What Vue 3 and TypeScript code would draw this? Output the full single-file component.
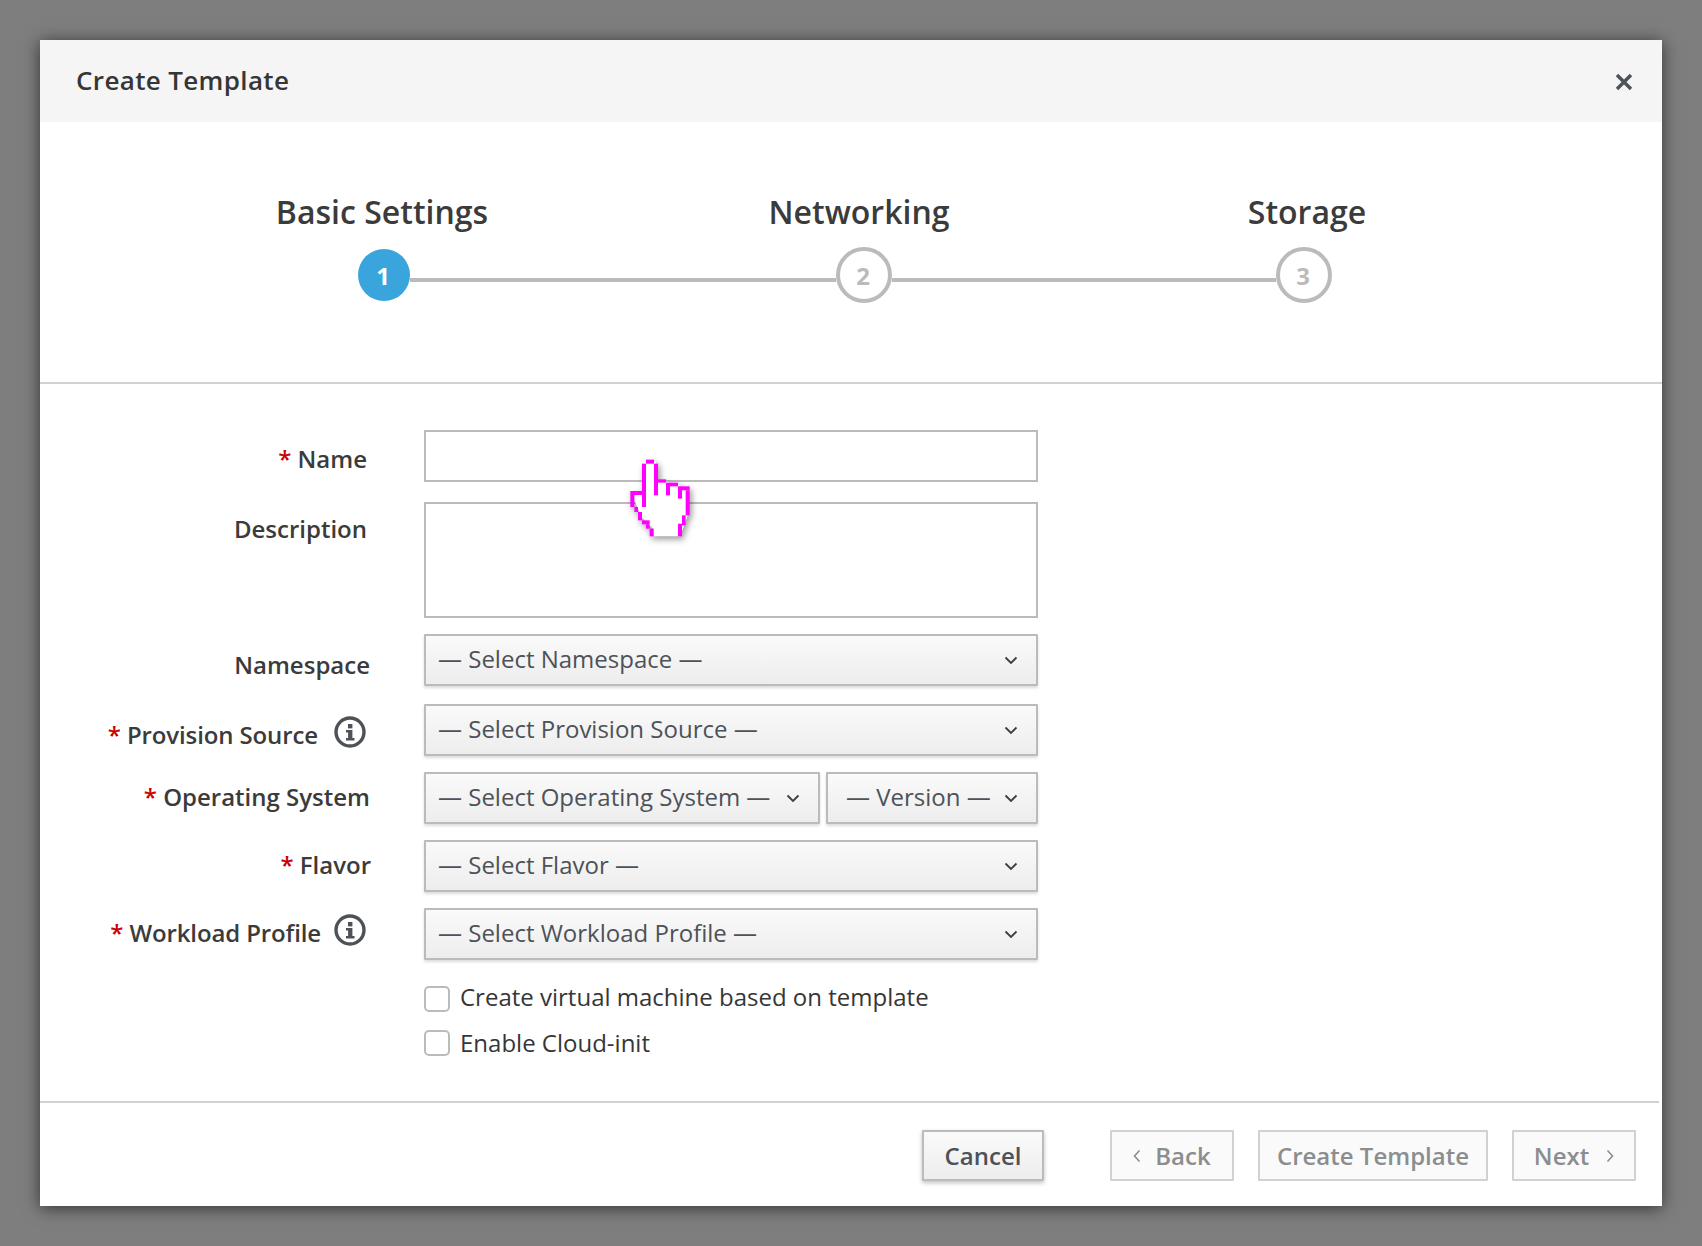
<script setup lang="ts">
type Row = {
  key: string;
  label: string;
  required?: boolean;
  info?: boolean;
  selects: { text: string; cls?: string }[];
};

const rows: Row[] = [
  { key: "namespace", label: "Namespace", selects: [{ text: "— Select Namespace —" }] },
  { key: "source", label: "Provision Source", required: true, info: true, selects: [{ text: "— Select Provision Source —" }] },
  {
    key: "os",
    label: "Operating System",
    required: true,
    selects: [
      { text: "— Select Operating System —", cls: "select-os" },
      { text: "— Version —", cls: "select-version" },
    ],
  },
  { key: "flavor", label: "Flavor", required: true, selects: [{ text: "— Select Flavor —" }] },
  { key: "workload", label: "Workload Profile", required: true, info: true, selects: [{ text: "— Select Workload Profile —" }] },
];

// cursor outline, in units of the white hand's own grid
const cursorEdges = [
  [139, 178, 24, 12], [127, 190, 12, 130], [163, 190, 12, 95], [175, 237, 24, 10],
  [199, 247, 12, 38], [211, 247, 24, 11], [235, 258, 12, 37], [247, 258, 23, 12],
  [258, 270, 12, 75], [247, 345, 11, 30], [235, 370, 12, 38], [92, 272, 35, 12],
  [92, 284, 12, 36], [104, 320, 11, 15], [115, 335, 12, 25], [127, 360, 23, 12],
  [139, 372, 11, 13], [150, 385, 12, 23],
];
</script>

<template>
  <div class="backdrop">
    <div class="modal">
      <header class="modal-head">
        <h1>Create Template</h1>
        <svg class="close" viewBox="0 0 18 18" width="18" height="18">
          <path d="M2 2 16 16M16 2 2 16" stroke="#4d5258" stroke-width="3.4" fill="none" />
        </svg>
      </header>

      <section class="steps">
        <div class="step-titles">
          <span class="title-basic">Basic Settings</span>
          <span class="title-net">Networking</span>
          <span class="title-storage">Storage</span>
        </div>
        <div class="step-track">
          <span class="dot dot-active">1</span>
          <span class="track-line track-first"></span>
          <span class="dot">2</span>
          <span class="track-line"></span>
          <span class="dot">3</span>
        </div>
      </section>

      <form class="form" @submit.prevent>
        <div class="row row-name">
          <label class="label"><span><em>*</em> Name</span></label>
          <input class="field field-name" type="text" />
        </div>
        <div class="row row-desc">
          <label class="label">Description</label>
          <textarea class="field field-desc"></textarea>
        </div>
        <div v-for="row in rows" :key="row.key" class="row" :class="`row-${row.key}`">
          <label class="label">
            <span><em v-if="row.required">*</em> {{ row.label }}</span>
            <svg v-if="row.info" class="info" viewBox="0 0 32 32" width="32" height="32">
              <circle cx="16" cy="16" r="14" fill="none" stroke="#4d5258" stroke-width="3.4" />
              <rect x="14" y="8" width="4.4" height="4.4" fill="#4d5258" />
              <path d="M12 14h6.4v8H20.5v2.4H12V22h2.1v-5.6H12z" fill="#4d5258" />
            </svg>
          </label>
          <div class="selects">
            <button v-for="s in row.selects" :key="s.text" type="button" class="select" :class="s.cls">
              <span class="select-text">{{ s.text }}</span>
              <svg viewBox="0 0 14 9" width="14" height="9">
                <path d="M1.5 1.5 7 7l5.5-5.5" fill="none" stroke="#3a3f44" stroke-width="1.8" />
              </svg>
            </button>
          </div>
        </div>
        <label class="check check-vm"><input type="checkbox" /> <span class="check-text">Create virtual machine based on template</span></label>
        <label class="check check-cloud"><input type="checkbox" /> <span class="check-text">Enable Cloud-init</span></label>
      </form>

      <footer class="foot">
        <button type="button" class="btn btn-cancel">Cancel</button>
        <button type="button" class="btn btn-off btn-back">
          <svg viewBox="0 0 8 14" width="8" height="14"><path d="M6.5 1.5 1.5 7l5 5.5" fill="none" stroke="#8b8d8f" stroke-width="1.6" /></svg>
          Back
        </button>
        <button type="button" class="btn btn-off btn-create">Create Template</button>
        <button type="button" class="btn btn-off btn-next">
          Next
          <svg viewBox="0 0 8 14" width="8" height="14"><path d="M1.5 1.5 6.5 7l-5 5.5" fill="none" stroke="#8b8d8f" stroke-width="1.6" /></svg>
        </button>
      </footer>

      <svg class="cursor" viewBox="85 170 195 250" width="65" height="83.33">
        <path d="M133 184h36v60h40v10h32v12h23v80l-11 30-12 32h-80v-22l-35-36-22-50v-28h35z" fill="#fff" />
        <rect v-for="(e, i) in cursorEdges" :key="i" :x="e[0]" :y="e[1]" :width="e[2]" :height="e[3]" fill="#ff00ff" />
      </svg>
    </div>
  </div>
</template>

<style scoped>
.backdrop {
  box-sizing: border-box;
  width: 100%;
  height: 1246px;
  padding: 40px;
  background: #7e7e7e;
  font-family: "Open Sans", sans-serif;
  color: #363636;
}

.modal {
  position: relative;
  display: flex;
  flex-direction: column;
  height: 1166px;
  background: #fff;
  box-shadow: 0 2px 16px rgba(0, 0, 0, 0.6);
}

.modal-head {
  display: flex;
  align-items: center;
  justify-content: space-between;
  height: 82px;
  padding: 0 29px 0 36px;
  background: #f5f5f5;
}

.close {
  margin-top: 2px;
}

.modal-head h1 {
  margin: 0 0 2px;
  font-size: 26px;
  font-weight: 600;
  letter-spacing: 0.35px;
  line-height: 1;
}

.steps {
  height: 262px;
  border-bottom: 2px solid #d1d1d1;
  box-sizing: border-box;
  padding-top: 66px;
}

.step-titles {
  position: relative;
  height: 47px;
  font-size: 32px;
  font-weight: 600;
  line-height: 47px;
  color: #3b3b3b;
}

.step-titles span {
  position: absolute;
  white-space: nowrap;
  transform: translateX(-50%);
}

.title-basic { left: 342px; }
.title-net { left: 819px; }
.title-storage { left: 1267px; }

.step-track {
  display: flex;
  align-items: center;
  margin: 12px 0 0 318px;
  width: 974px;
}

.dot {
  box-sizing: border-box;
  display: flex;
  align-items: center;
  justify-content: center;
  flex: none;
  width: 56px;
  height: 56px;
  padding-right: 2px;
  border: 4px solid #bbb;
  border-radius: 50%;
  color: #bbb;
  font-size: 24px;
  font-weight: 700;
}

.dot-active {
  width: 52px;
  height: 52px;
  border: 0;
  background: #39a5dc;
  color: #fff;
}

.track-line {
  flex: 1;
  height: 4px;
  margin-top: 10px;
  background: #bbb;
}

.track-first {
  flex: none;
  width: 426px;
}

.form {
  display: flex;
  flex-direction: column;
  flex: 1;
  padding-top: 46px;
}

.row {
  display: flex;
  align-items: flex-start;
}

.row-desc { margin-top: 20px; }
.row-namespace { margin-top: 16px; }
.row-source { margin-top: 18px; }
.row-os { margin-top: 16px; }
.row-flavor { margin-top: 16px; }
.row-workload { margin-top: 16px; }

.label {
  display: flex;
  align-items: flex-start;
  justify-content: flex-end;
  flex: none;
  box-sizing: border-box;
  width: 384px;
  padding-right: 57px;
  padding-top: 12px;
  color: #3b3b3b;
  font-size: 24px;
  font-weight: 600;
  white-space: nowrap;
}

.label em {
  color: #c00;
  font-style: normal;
}

.row-desc .label { padding-top: 10px; }
.row-namespace .label { padding: 14px 54px 0 0; }
.row-source .label { padding-top: 14px; letter-spacing: -0.12px; }
.row-os .label { padding: 8px 54px 0 0; }
.row-flavor .label { padding: 8px 53px 0 0; }
.row-workload .label { padding-top: 8px; letter-spacing: -0.12px; }

.info {
  flex: none;
  margin-right: 1px;
}

.row-source .info { margin-top: -2px; margin-left: 16px; }
.row-workload .info { margin-top: -2px; margin-left: 13px; }

.field {
  display: block;
  box-sizing: border-box;
  width: 614px;
  margin: 0;
  border: 2px solid #bbb;
  background: #fff;
  outline: none;
  resize: none;
}

.field-name { height: 52px; }
.field-desc { height: 116px; }

.selects {
  display: flex;
  gap: 6px;
  width: 614px;
}

.select {
  display: flex;
  align-items: center;
  justify-content: space-between;
  box-sizing: border-box;
  flex: 1;
  height: 52px;
  padding: 0 18px 0 12px;
  border: 2px solid #bbb;
  border-radius: 1px;
  background: linear-gradient(to bottom, #fafafa, #ededed);
  box-shadow: 0 2px 3px rgba(0, 0, 0, 0.14);
  color: #4d5258;
  font-family: inherit;
  font-size: 24px;
  white-space: nowrap;
}

.select-text {
  padding-bottom: 3px;
}

.select-os { flex: none; width: 396px; }
.select-version { flex: none; width: 212px; padding-left: 18px; }

.check {
  display: flex;
  align-items: center;
  gap: 10px;
  height: 36px;
  margin-left: 384px;
  font-size: 24px;
  color: #363636;
}

.check-text {
  padding-bottom: 5px;
}

.check-cloud .check-text {
  padding-bottom: 1px;
}

.check input {
  appearance: none;
  box-sizing: border-box;
  width: 26px;
  height: 26px;
  margin: 0;
  border: 2px solid #bbb;
  border-radius: 5px;
  background: #fff;
}

.check-vm { margin-top: 21px; }
.check-cloud { margin-top: 8px; }

.foot {
  display: flex;
  align-items: center;
  height: 101px;
  margin-right: 3px;
  padding: 2px 23px 0 882px;
  border-top: 2px solid #d1d1d1;
}

.btn {
  display: flex;
  align-items: center;
  justify-content: center;
  gap: 14px;
  box-sizing: border-box;
  height: 51px;
  border: 2px solid #bbb;
  border-radius: 1px;
  font-family: inherit;
  font-size: 24px;
  font-weight: 600;
}

.btn-cancel {
  width: 122px;
  background: linear-gradient(to bottom, #fafafa, #ededed);
  box-shadow: 0 2px 4px rgba(0, 0, 0, 0.25);
  color: #4d5258;
}

.btn-off {
  border-color: #d1d1d1;
  background: #fafafa;
  color: #8b8d8f;
}

.btn-back { width: 124px; margin-left: 66px; }
.btn-create { width: 230px; margin-left: 24px; }
.btn-next { width: 124px; margin-left: 24px; gap: 17px; }

.cursor {
  position: absolute;
  left: 588px;
  top: 417px;
  filter: drop-shadow(2px 3px 3px rgba(0, 0, 0, 0.4));
}
</style>

<style>
html, body { margin: 0; background: #7e7e7e; }
</style>
